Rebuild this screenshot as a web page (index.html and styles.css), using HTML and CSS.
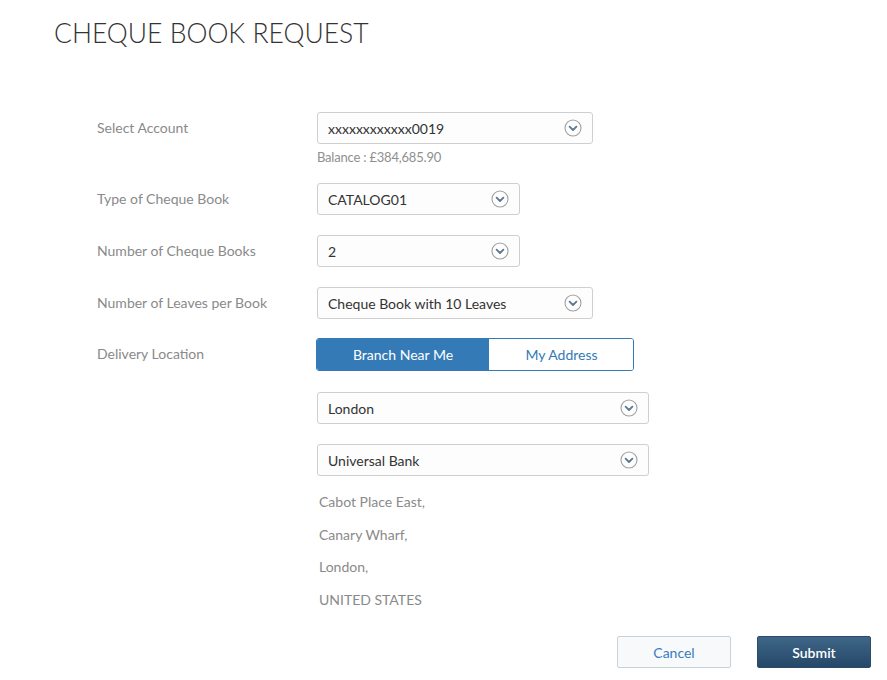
FILE: index.html
```html
<!DOCTYPE html>
<html>
<head>
<meta charset="utf-8">
<link rel="stylesheet" href="styles.css">
</head>
<body>
<div class="page">
  <h1 class="title">CHEQUE BOOK REQUEST</h1>
  <div class="form">
    <div class="row">
      <div class="label">Select Account</div>
      <div class="field">
        <div class="select w276"><span>xxxxxxxxxxxx0019</span><svg class="chev" viewBox="0 0 18 18"><circle cx="9" cy="9" r="8" /><path d="M5.6 7.6 L9 11 L12.4 7.6" /></svg></div>
        <div class="balance">Balance : £384,685.90</div>
      </div>
    </div>
    <div class="row">
      <div class="label">Type of Cheque Book</div>
      <div class="field">
        <div class="select w203"><span>CATALOG01</span><svg class="chev" viewBox="0 0 18 18"><circle cx="9" cy="9" r="8" /><path d="M5.6 7.6 L9 11 L12.4 7.6" /></svg></div>
      </div>
    </div>
    <div class="row">
      <div class="label">Number of Cheque Books</div>
      <div class="field">
        <div class="select w203"><span>2</span><svg class="chev" viewBox="0 0 18 18"><circle cx="9" cy="9" r="8" /><path d="M5.6 7.6 L9 11 L12.4 7.6" /></svg></div>
      </div>
    </div>
    <div class="row">
      <div class="label">Number of Leaves per Book</div>
      <div class="field">
        <div class="select w276"><span>Cheque Book with 10 Leaves</span><svg class="chev" viewBox="0 0 18 18"><circle cx="9" cy="9" r="8" /><path d="M5.6 7.6 L9 11 L12.4 7.6" /></svg></div>
      </div>
    </div>
    <div class="row row-toggle">
      <div class="label">Delivery Location</div>
      <div class="field">
        <div class="toggle">
          <div class="opt active">Branch Near Me</div>
          <div class="opt">My Address</div>
        </div>
        <div class="select w332 mt21"><span>London</span><svg class="chev" viewBox="0 0 18 18"><circle cx="9" cy="9" r="8" /><path d="M5.6 7.6 L9 11 L12.4 7.6" /></svg></div>
        <div class="select w332 mt20"><span>Universal Bank</span><svg class="chev" viewBox="0 0 18 18"><circle cx="9" cy="9" r="8" /><path d="M5.6 7.6 L9 11 L12.4 7.6" /></svg></div>
        <div class="address">
          <div>Cabot Place East,</div>
          <div>Canary Wharf,</div>
          <div>London,</div>
          <div>UNITED STATES</div>
        </div>
      </div>
    </div>
  </div>
  <div class="actions">
    <button class="btn btn-cancel">Cancel</button>
    <button class="btn btn-submit">Submit</button>
  </div>
</div>
</body>
</html>
```
FILE: styles.css
```css
* { box-sizing: border-box; }
html, body { margin: 0; padding: 0; background: #fff; }
body { font-family: Lato, "Open Sans", sans-serif; }
.page { width: 887px; height: 680px; overflow: hidden; }
.title {
  margin: 0;
  padding: 17px 0 0 54px;
  font-weight: 300;
  font-size: 26.5px;
  line-height: 32px;
  color: #333;
  letter-spacing: 0;
}
.form { margin-top: 63px; padding-left: 97px; }
.row { display: flex; align-items: flex-start; margin-bottom: 18px; }
.row + .row { margin-bottom: 20px; }
.row:nth-child(4) { margin-bottom: 19px; }
.label {
  width: 220px;
  flex: none;
  font-size: 14px;
  line-height: 32px;
  color: #8a8a8a;
}
.field { display: flex; flex-direction: column; }
.select {
  height: 32px;
  border: 1px solid #cfcfcf;
  border-radius: 3px;
  background: #fdfdfd;
  display: flex;
  align-items: center;
  justify-content: space-between;
  padding: 0 10px 0 10px;
  font-size: 14px;
  color: #333;
}
.w276 { width: 276px; }
.w203 { width: 203px; }
.w332 { width: 332px; }
.mt21 { margin-top: 21px; }
.mt20 { margin-top: 20px; }
.chev { width: 18px; height: 18px; flex: none; }
.chev circle { fill: none; stroke: #a0a0a0; stroke-width: 1.1; }
.chev path { fill: none; stroke: #5d7790; stroke-width: 1.8; stroke-linecap: round; stroke-linejoin: round; }
.balance {
  margin-top: 5px;
  font-size: 13px;
  line-height: 16px;
  color: #8f8f8f;
  letter-spacing: -0.2px;
}
.toggle {
  display: flex;
  width: 318px;
  height: 33px;
  margin-left: -1px;
  border: 1px solid #337ab7;
  border-radius: 3px;
  overflow: hidden;
}
.opt {
  display: flex;
  align-items: center;
  justify-content: center;
  font-size: 14px;
  color: #337ab7;
  background: #fff;
  flex: none;
  width: 145px;
}
.opt.active { width: 172px; background: #337ab7; color: #fff; }
.address {
  margin-top: 10px;
  padding-left: 2px;
  font-size: 14px;
  line-height: 32.5px;
  color: #8a8a8a;
}
.actions {
  display: flex;
  justify-content: flex-end;
  gap: 26px;
  padding-right: 16px;
  margin-top: 20px;
}
.btn {
  width: 114px;
  height: 32px;
  border-radius: 2px;
  font-family: Lato, sans-serif;
  font-size: 14px;
  cursor: pointer;
}
.btn-cancel {
  background: #f8f9fa;
  border: 1px solid #c8d2db;
  color: #3a7bbf;
}
.btn-submit {
  background: linear-gradient(#3f6688, #254868);
  border: 1px solid #2a4c6c;
  color: #fff;
  font-weight: 600;
}
```
